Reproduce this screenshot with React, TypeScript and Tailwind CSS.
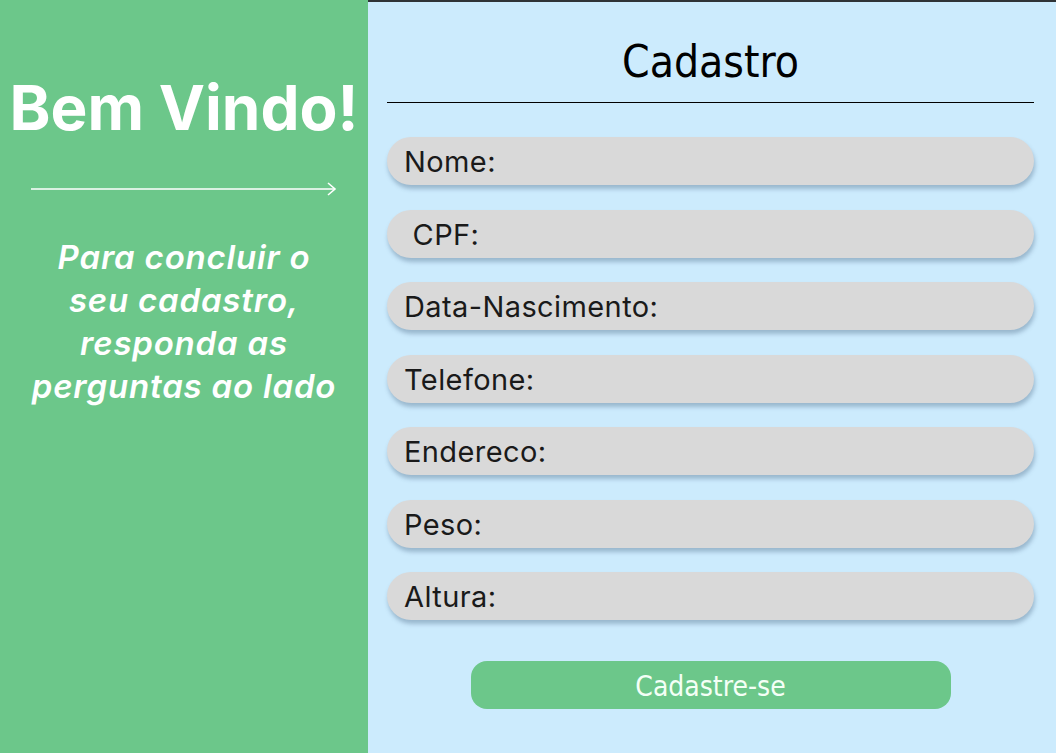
const campos = ["Nome:", "\u00A0CPF:", "Data-Nascimento:", "Telefone:", "Endereco:", "Peso:", "Altura:"];

export default function App() {
    return (
        <main className="flex h-[753px] w-[1056px] overflow-hidden font-['Inter',sans-serif]">
            <section className="flex w-[368px] shrink-0 flex-col items-center bg-[#6CC78A] text-white">
                <h1 className="mt-[72px] text-[62px] font-bold leading-[72px]">Bem Vindo!</h1>
                <div className="mt-[38px] flex w-[306px] items-center">
                    <svg width="306" height="14" viewBox="0 0 306 14" fill="none">
                        <line x1="0" y1="7" x2="304" y2="7" stroke="white" strokeWidth="1.6" />
                        <path d="M297 1 L304 7 L297 13" stroke="white" strokeWidth="1.6" fill="none" />
                    </svg>
                </div>
                <p className="mt-[40px] text-center text-[33px] font-semibold italic leading-[43px] tracking-[0.8px]">
                    Para concluir o<br />
                    seu cadastro,<br />
                    responda as<br />
                    perguntas ao lado
                </p>
            </section>

            <section className="flex flex-1 flex-col border-t-2 border-[#2f3336] bg-[#CCEBFD] pl-[19px] pr-[22px]">
                <h2 className="mt-[35px] text-center font-['DejaVu_Sans_Condensed','DejaVu_Sans',sans-serif] text-[44px] leading-[50px] text-black [font-stretch:condensed]">
                    Cadastro
                </h2>
                <div className="mt-[15px] h-px w-full bg-black" />

                <div className="mt-[34px] flex flex-col gap-[24.5px]">
                    {campos.map((campo) => (
                        <div
                            key={campo}
                            className="flex h-[48px] items-center rounded-full bg-[#D9D9D9] pl-[17px] pt-[2px] text-[29px] tracking-[0.4px] text-[#1a1a1a] shadow-[1px_4px_4px_rgba(60,90,120,0.35)]"
                        >
                            {campo}
                        </div>
                    ))}
                </div>

                <button className="mx-auto mt-[41px] h-[48px] w-[480px] rounded-[16px] bg-[#6CC78A] pt-[3px] font-['DejaVu_Sans_Condensed','DejaVu_Sans',sans-serif] text-[28px] text-[#f4fff6] [font-stretch:condensed]">
                    Cadastre-se
                </button>
            </section>
        </main>
    );
}
